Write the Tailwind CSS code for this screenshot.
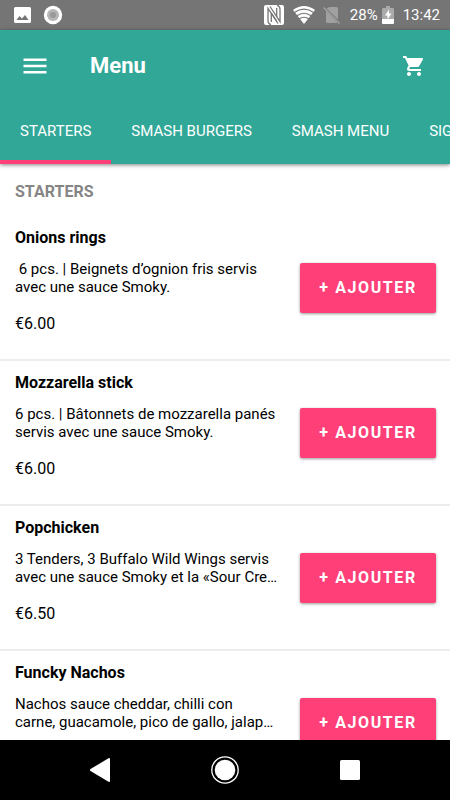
<!DOCTYPE html>
<html lang="fr">
<head>
    <meta charset="UTF-8">
    <meta name="viewport" content="width=device-width, initial-scale=1.0">
    <title>Menu</title>
    <script src="https://cdn.jsdelivr.net/npm/@tailwindcss/browser@4"></script>
</head>
<body class="flex h-screen flex-col overflow-hidden bg-white font-['Roboto',sans-serif] text-black">
    <!-- Status bar -->
    <div class="flex h-[30px] shrink-0 items-center justify-between bg-[#757575] pr-[10px] pl-[14px] text-white">
        <div class="flex items-center gap-3">
            <svg class="h-[17px] w-[17px]" viewBox="0 0 17 17" fill="currentColor" aria-hidden="true">
                <path fill-rule="evenodd" d="M1.500 0H15.500Q17 0 17 1.500V14.500Q17 16 15.500 16H1.500Q0 16 0 14.500V1.500Q0 0 1.500 0ZM2.500 13H14.500L11 8L8 11.500L5.500 9Z"/>
            </svg>
            <svg class="h-5 w-5" viewBox="0 0 20 20" aria-hidden="true">
                <circle cx="10" cy="10" r="9.200" fill="#fff"/>
                <circle cx="10" cy="10" r="6" fill="#b5b5b5"/>
                <circle cx="10" cy="10" r="3" fill="#999"/>
            </svg>
        </div>
        <div class="flex items-center">
            <svg class="h-5 w-5" viewBox="0 0 20 20" aria-hidden="true">
                <rect width="20" height="20" rx="2" fill="#fff"/>
                <path fill="none" stroke="#757575" stroke-width="1.300" d="M7 19.500Q4 19 4 15.500V3.500L14 18.500M13 .5Q16 1 16 4.500V16.500L6 1.500"/>
                <path fill="none" stroke="#757575" stroke-width="1.300" d="M7.300 8V17M12.700 3V12M7.300 8L12.700 16"/>
            </svg>
            <svg class="ml-[9px] h-5 w-[22px]" viewBox="0 0 22 20" aria-hidden="true">
                <path fill="#fff" d="M0 5Q11-3 22 5L11 19Z"/>
                <path fill="none" stroke="#757575" stroke-width="1.200" d="M1 7.700Q11 .5 21 7.700M3.500 11Q11 5.500 18.500 11M6 14Q11 10.500 16 14"/>
            </svg>
            <svg class="ml-[7px] h-5 w-5" viewBox="0 0 20 20" aria-hidden="true">
                <path fill="#a0a0a0" d="M7.500 2H14.500Q16 2 16 3.500V14.500L4.500 3.500ZM4 5.500L15.500 18H5.500Q4 18 4 16.500Z"/>
                <path fill="none" stroke="#a0a0a0" stroke-width="1.400" d="M1.500 2.500L17.500 18.500"/>
            </svg>
            <span class="ml-2 text-[15px] leading-5">28%</span>
            <svg class="ml-1 h-5 w-3" viewBox="0 0 12 20" aria-hidden="true">
                <path fill="#aaa" d="M4 1H8V3H10.500Q12 3 12 4V14H0V4Q0 3 1.500 3H4Z"/>
                <path fill="#fff" d="M0 14H12V18Q12 19 11 19H1Q0 19 0 18ZM7 4.500L3 10.500H5.500V14.500L9.500 8.500H7Z"/>
            </svg>
            <span class="ml-[9px] text-[15px] leading-5">13:42</span>
        </div>
    </div>

    <!-- App bar and category tabs -->
    <header class="z-10 shrink-0 bg-[#31a797] text-white shadow-[0_1px_4px_rgba(0,0,0,0.5)]">
        <div class="flex h-[71px] items-center pr-6 pl-[23px]">
            <button type="button" aria-label="Ouvrir le menu">
                <svg class="h-4 w-6" viewBox="0 0 24 16" fill="currentColor" aria-hidden="true">
                    <path d="M.5 .5H23.500V3H.5ZM.5 6.800H23.500V9.300H.5ZM.5 13H23.500V15.500H.5Z"/>
                </svg>
            </button>
            <h1 class="ml-[43px] grow text-[22px] leading-7 font-bold">Menu</h1>
            <button type="button" aria-label="Panier">
                <svg class="h-6 w-6" viewBox="0 0 24 24" fill="currentColor" aria-hidden="true">
                    <path d="M7 18c-1.100 0-1.990.9-1.990 2S5.900 22 7 22s2-.9 2-2-.9-2-2-2zM1 2v2h2l3.600 7.590-1.350 2.450c-.16.280-.25.610-.25.960 0 1.100.9 2 2 2h12v-2H7.420c-.14 0-.25-.11-.25-.25l.03-.12.900-1.630h7.450c.75 0 1.410-.41 1.750-1.030l3.580-6.490c.08-.14.120-.31.120-.48 0-.55-.45-1-1-1H5.210l-.94-2H1zm16 16c-1.100 0-1.990.9-1.990 2s.89 2 1.990 2 2-.9 2-2-.9-2-2-2z"/>
                </svg>
            </button>
        </div>
        <nav class="flex overflow-hidden text-[15px] leading-5 whitespace-nowrap">
            <a href="#starters" class="border-b-4 border-[#ff3f78] px-5 pt-5 pb-[19px]">STARTERS</a>
            <a href="#smash-burgers" class="px-5 pt-5">SMASH BURGERS</a>
            <a href="#smash-menu" class="px-5 pt-5">SMASH MENU</a>
            <a href="#signatures" class="px-5 pt-5">SIGNATURES</a>
        </nav>
    </header>

    <main id="starters" class="min-h-0 grow overflow-hidden">
        <h2 class="px-[15px] pt-4 pb-3 text-base leading-6 font-bold text-[#858585]">STARTERS</h2>
        <ul class="divide-y-2 divide-[#ececec]">
            <li class="flex h-[145px] items-start gap-5 pt-3 pr-[14px] pl-[15px]">
                <div class="min-w-0 grow">
                    <h3 class="text-base leading-5 font-bold">Onions rings</h3>
                    <p class="mt-3 line-clamp-2 text-[15px] leading-[18px]">&nbsp;6 pcs. | Beignets d’ognion fris servis avec une sauce Smoky.</p>
                    <p class="mt-4 text-base leading-6">€6.00</p>
                </div>
                <button type="button" class="mt-[35px] h-[50px] w-[136px] shrink-0 rounded-xs bg-[#ff3f78] text-base font-bold tracking-widest text-white shadow-[0_1px_3px_rgba(0,0,0,0.4)]">+ AJOUTER</button>
            </li>
        </ul>
    </main>

    <!-- System navigation -->
    <div class="z-10 grid h-[60px] shrink-0 grid-cols-3 items-center bg-black px-[37px] text-white">
        <button type="button" aria-label="Retour" class="justify-self-center">
            <svg class="h-6 w-5" viewBox="0 0 20 24" fill="currentColor" aria-hidden="true"><path d="M20 1V23Q20 24.500 18.500 23.700L.5 13Q-.5 12 .5 11L18.500 .3Q20-.5 20 1Z"/></svg>
        </button>
        <button type="button" aria-label="Accueil" class="justify-self-center">
            <svg class="h-7 w-7" viewBox="0 0 28 28" aria-hidden="true"><circle cx="14" cy="14" r="13.200" fill="none" stroke="#fff" stroke-width="1.300"/><circle cx="14" cy="14" r="10.300" fill="#fff"/></svg>
        </button>
        <button type="button" aria-label="Applications récentes" class="justify-self-center">
            <svg class="h-5 w-5" viewBox="0 0 20 20" fill="currentColor" aria-hidden="true"><rect width="20" height="20" rx="1.500"/></svg>
        </button>
    </div>

    <script>
        const list = document.querySelector('#starters ul');
        const dishes = [
            ['Mozzarella stick', '6 pcs. | Bâtonnets de mozzarella panés servis avec une sauce Smoky.', '€6.00'],
            ['Popchicken', '3 Tenders, 3 Buffalo Wild Wings servis avec une sauce Smoky et la «Sour Cre…', '€6.50'],
            ['Funcky Nachos', 'Nachos sauce cheddar, chilli con carne,\u00a0guacamole, pico de gallo, jalap…', ''],
        ];
        for (const [name, description, price] of dishes) {
            const item = list.firstElementChild.cloneNode(true);
            item.querySelector('h3').textContent = name;
            const [text, cost] = item.querySelectorAll('p');
            text.textContent = description;
            cost.textContent = price;
            list.append(item);
        }
    </script>
</body>
</html>
